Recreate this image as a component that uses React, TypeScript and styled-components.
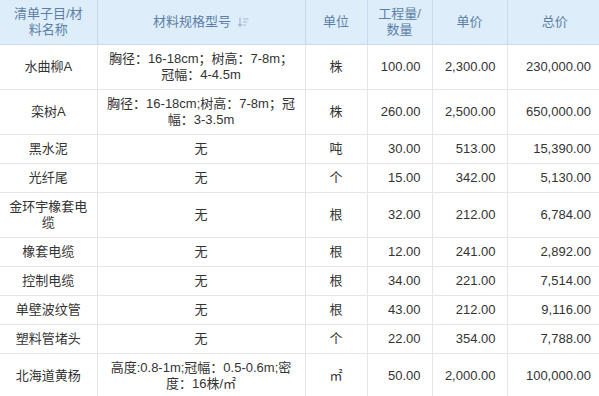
import React from 'react';
import styled, { createGlobalStyle } from 'styled-components';

const GlobalStyle = createGlobalStyle`
  html, body {
    margin: 0;
    padding: 0;
    background: #fff;
    overflow: hidden;
  }
  body {
    font-family: "Liberation Sans", "Noto Sans CJK SC", sans-serif;
    font-size: 13px;
    color: #333;
  }
`;

type Row = {
  name: string;
  spec: string;
  unit: string;
  qty: string;
  price: string;
  total: string;
};

const rows: Row[] = [
  { name: '水曲柳A', spec: '胸径：16-18cm；树高：7-8m；冠幅：4-4.5m', unit: '株', qty: '100.00', price: '2,300.00', total: '230,000.00' },
  { name: '栾树A', spec: '胸径：16-18cm;树高：7-8m；冠幅：3-3.5m', unit: '株', qty: '260.00', price: '2,500.00', total: '650,000.00' },
  { name: '黑水泥', spec: '无', unit: '吨', qty: '30.00', price: '513.00', total: '15,390.00' },
  { name: '光纤尾', spec: '无', unit: '个', qty: '15.00', price: '342.00', total: '5,130.00' },
  { name: '金环宇橡套电缆', spec: '无', unit: '根', qty: '32.00', price: '212.00', total: '6,784.00' },
  { name: '橡套电缆', spec: '无', unit: '根', qty: '12.00', price: '241.00', total: '2,892.00' },
  { name: '控制电缆', spec: '无', unit: '根', qty: '34.00', price: '221.00', total: '7,514.00' },
  { name: '单壁波纹管', spec: '无', unit: '根', qty: '43.00', price: '212.00', total: '9,116.00' },
  { name: '塑料管堵头', spec: '无', unit: '个', qty: '22.00', price: '354.00', total: '7,788.00' },
  { name: '北海道黄杨', spec: '高度:0.8-1m;冠幅：0.5-0.6m;密度：16株/㎡', unit: '㎡', qty: '50.00', price: '2,000.00', total: '100,000.00' },
];

const widths = [97, 208, 62, 65, 75, 95];

const SortIcon = () => (
  <svg width="11" height="10" viewBox="0 0 11 10" fill="none" stroke="#9fb7d2" strokeWidth="1.2">
    <path d="M2 0.5V9M0.3 7.2L2 9.2L3.7 7.2" />
    <path d="M5 2H10.5M5 5H9.3M5 8H8" />
  </svg>
);

const App = () => {
  return (
    <>
      <GlobalStyle />
      <Table>
        <colgroup>
          {widths.map((w, i) => (
            <col key={i} style={{ width: w }} />
          ))}
        </colgroup>
        <thead>
          <tr>
            <Th>清单子目/材料名称</Th>
            <Th>
              <HeadLabel>
                材料规格型号
                <SortIcon />
              </HeadLabel>
            </Th>
            <Th>单位</Th>
            <Th>工程量/数量</Th>
            <Th>单价</Th>
            <Th>总价</Th>
          </tr>
        </thead>
        <tbody>
          {rows.map((r) => (
            <tr key={r.name}>
              <Td>{r.name}</Td>
              <Td $wide>{r.spec}</Td>
              <Td>{r.unit}</Td>
              <Td $num>{r.qty}</Td>
              <Td $num>{r.price}</Td>
              <Td $num>{r.total}</Td>
            </tr>
          ))}
        </tbody>
      </Table>
    </>
  );
};

const Table = styled.table`
  width: 602px;
  table-layout: fixed;
  border-collapse: collapse;
  border-spacing: 0;
`;

const Th = styled.th`
  height: 44px;
  padding: 6px 8px;
  box-sizing: border-box;
  background: #deedfa;
  color: #5b7fa7;
  font-weight: normal;
  line-height: 16px;
  text-align: center;
  vertical-align: middle;
  border-left: 1px solid #c6dbee;
  border-bottom: 1px solid #c6dbee;
  word-break: break-all;

  &:first-child {
    border-left: none;
  }
`;

const HeadLabel = styled.span`
  display: inline-flex;
  align-items: center;
  gap: 7px;
`;

const Td = styled.td<{ $num?: boolean; $wide?: boolean }>`
  padding: 6px ${(p) => (p.$num ? '11px' : '8px')};
  line-height: 16px;
  text-align: ${(p) => (p.$num ? 'right' : 'center')};
  vertical-align: middle;
  color: #333;
  border-left: 1px solid #e6e6e6;
  border-bottom: 1px solid #e6e6e6;
  word-break: break-all;

  &:first-child {
    border-left: none;
  }
`;

export default App;
